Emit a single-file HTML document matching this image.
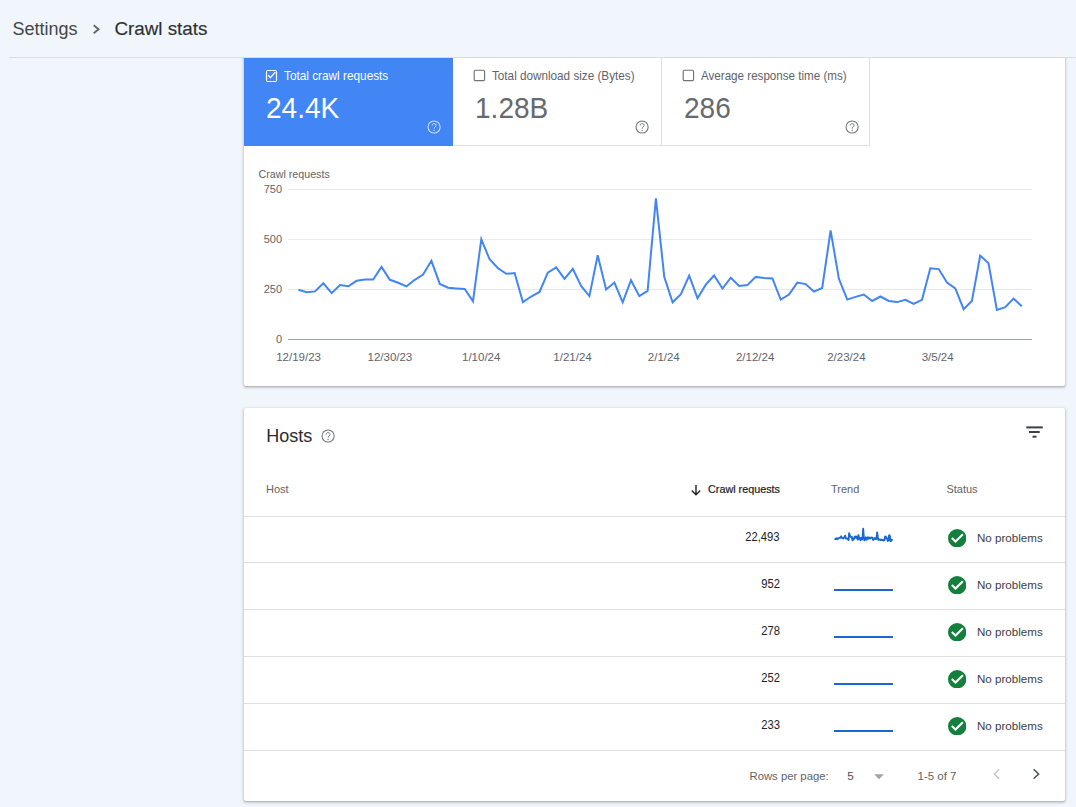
<!DOCTYPE html>
<html><head><meta charset="utf-8"><style>
html,body{margin:0;padding:0;width:1076px;height:807px;overflow:hidden;background:#f1f5fc;font-family:"Liberation Sans",sans-serif;}
.abs{position:absolute;}
.hline{height:1px;background:#e0e0e0;}
.card{position:absolute;background:#fff;border-radius:2px;box-shadow:0 1px 2px 0 rgba(60,64,67,.3),0 1px 3px 1px rgba(60,64,67,.15);}
.tl{font-size:12px;line-height:14px;white-space:nowrap;transform-origin:0 50%;}
.big{font-size:30px;line-height:32px;white-space:nowrap;transform:scaleX(0.935);transform-origin:0 50%;}
.ax{font-size:11px;line-height:13px;color:#5f6368;white-space:nowrap;}
.th{font-size:11px;line-height:13px;color:#5f6368;white-space:nowrap;}
.num{font-size:12.6px;line-height:14px;color:#202124;white-space:nowrap;transform:scaleX(0.89);transform-origin:100% 50%;}
.np{font-size:11.6px;line-height:14px;color:#3c4043;white-space:nowrap;}
</style></head><body>
<div class="card" style="left:244px;top:30px;width:821px;height:356px;">
  <div class="abs" style="left:0;top:28px;width:209px;height:88px;background:#4285f4"></div>
  <div class="abs" style="left:209px;top:115px;width:417px;height:1px;background:#e0e0e0"></div>
  <div class="abs" style="left:417px;top:28px;width:1px;height:88px;background:#e0e0e0"></div>
  <div class="abs" style="left:625px;top:28px;width:1px;height:88px;background:#e0e0e0"></div>
</div>
<!-- header cover -->
<div class="abs" style="left:0;top:0;width:1076px;height:57px;background:#f1f5fc"></div>
<div class="abs" style="left:9px;top:57px;width:1067px;height:1px;background:#dadce0"></div>

<div class="abs" style="left:12.5px;top:18px;font-size:18px;line-height:22px;color:#444746">Settings</div>
<svg class="abs" style="left:90px;top:22px" width="14" height="14" viewBox="0 0 14 14"><polyline points="3.7,3.2 8.6,7.2 3.7,11.2" fill="none" stroke="#5f6368" stroke-width="1.8"/></svg>
<div class="abs" style="left:114.5px;top:18px;font-size:18.8px;line-height:22px;color:#2d2f31;-webkit-text-stroke:0.15px #2d2f31">Crawl stats</div>

<!-- tile 1 -->
<svg class="abs" style="left:265px;top:69px" width="13" height="14" viewBox="0 0 13 14"><rect x="1.5" y="1.5" width="10" height="11" rx="1.2" fill="none" stroke="#fff" stroke-width="1.2"/><polyline points="3.2,6.3 5.4,8.6 10.3,3.1" fill="none" stroke="#fff" stroke-width="1.4"/></svg>
<div class="abs tl" style="left:283.5px;top:69px;color:#fff;font-size:12.7px;transform:scaleX(0.93)">Total crawl requests</div>
<div class="abs big" style="left:265.5px;top:91.6px;color:#fff">24.4K</div>
<svg class="abs" style="left:425.8px;top:118.8px" width="16" height="16" viewBox="0 0 16 16"><circle cx="8.1" cy="8" r="6.05" fill="none" stroke="rgba(255,255,255,0.75)" stroke-width="1.05"/><path d="M6.15 6.5 C6.15 5.3 7.0 4.6 8.1 4.6 C9.3 4.6 10.1 5.4 10.1 6.4 C10.1 7.7 8.1 8.1 8.1 9.7" fill="none" stroke="rgba(255,255,255,0.75)" stroke-width="1"/><circle cx="8.1" cy="11.5" r="0.65" fill="rgba(255,255,255,0.75)"/></svg>
<!-- tile 2 -->
<svg class="abs" style="left:473px;top:69px" width="13" height="13" viewBox="0 0 13 13"><rect x="1.2" y="1.2" width="10.4" height="10.4" rx="1.3" fill="none" stroke="#6f7276" stroke-width="1.15"/></svg>
<div class="abs tl" style="left:492.3px;top:69px;color:#5f6368;font-size:12.6px;transform:scaleX(0.93)">Total download size (Bytes)</div>
<div class="abs big" style="left:475px;top:91.6px;color:#666a6f">1.28B</div>
<svg class="abs" style="left:634.3px;top:118.7px" width="16" height="16" viewBox="0 0 16 16"><circle cx="8.1" cy="8" r="6.05" fill="none" stroke="#6f7377" stroke-width="1.05"/><path d="M6.15 6.5 C6.15 5.3 7.0 4.6 8.1 4.6 C9.3 4.6 10.1 5.4 10.1 6.4 C10.1 7.7 8.1 8.1 8.1 9.7" fill="none" stroke="#6f7377" stroke-width="1"/><circle cx="8.1" cy="11.5" r="0.65" fill="#6f7377"/></svg>
<!-- tile 3 -->
<svg class="abs" style="left:681.8px;top:69px" width="13" height="13" viewBox="0 0 13 13"><rect x="1.2" y="1.2" width="10.4" height="10.4" rx="1.3" fill="none" stroke="#6f7276" stroke-width="1.15"/></svg>
<div class="abs tl" style="left:700.8px;top:69px;color:#5f6368;font-size:12.6px;transform:scaleX(0.922)">Average response time (ms)</div>
<div class="abs big" style="left:683.5px;top:91.6px;color:#666a6f">286</div>
<svg class="abs" style="left:843.6px;top:119.1px" width="16" height="16" viewBox="0 0 16 16"><circle cx="8.1" cy="8" r="6.05" fill="none" stroke="#6f7377" stroke-width="1.05"/><path d="M6.15 6.5 C6.15 5.3 7.0 4.6 8.1 4.6 C9.3 4.6 10.1 5.4 10.1 6.4 C10.1 7.7 8.1 8.1 8.1 9.7" fill="none" stroke="#6f7377" stroke-width="1"/><circle cx="8.1" cy="11.5" r="0.65" fill="#6f7377"/></svg>

<!-- chart -->
<div class="abs ax" style="left:258.5px;top:167.5px;font-size:10.7px">Crawl requests</div>
<svg class="abs" style="left:0;top:0" width="1076" height="807" viewBox="0 0 1076 807">
  <g stroke="#e8eaed" stroke-width="1">
    <line x1="288" y1="189.5" x2="1032" y2="189.5"/>
    <line x1="288" y1="239.5" x2="1032" y2="239.5"/>
    <line x1="288" y1="289.5" x2="1032" y2="289.5"/>
  </g>
  <line x1="288" y1="339.5" x2="1032" y2="339.5" stroke="#9aa0a6" stroke-width="1"/>
  <polyline points="298.4,289.8 306.7,292.2 315.0,291.4 323.3,283.3 331.7,293.1 340.0,285.1 348.3,286.3 356.6,280.8 364.9,279.6 373.2,279.6 381.5,266.9 389.9,279.8 398.2,282.8 406.5,286.3 414.8,279.8 423.1,274.5 431.4,260.8 439.8,283.9 448.1,287.7 456.4,288.4 464.7,289.0 473.0,301.2 481.3,239.3 489.6,259.3 498.0,268.3 506.3,273.8 514.6,273.0 522.9,302.1 531.2,296.5 539.5,292.0 547.8,272.6 556.2,267.3 564.5,278.8 572.8,268.9 581.1,285.9 589.4,296.1 597.7,255.2 606.1,289.4 614.4,282.6 622.7,302.3 631.0,280.2 639.3,296.1 647.6,290.8 655.9,198.4 664.3,277.1 672.6,302.3 680.9,294.1 689.2,275.7 697.5,298.2 705.8,284.7 714.1,275.5 722.5,288.6 730.8,277.7 739.1,285.9 747.4,285.1 755.7,276.9 764.0,278.1 772.4,278.5 780.7,299.6 789.0,294.5 797.3,282.6 805.6,284.1 813.9,291.6 822.2,288.0 830.6,230.5 838.9,278.8 847.2,299.6 855.5,296.9 863.8,294.5 872.1,301.0 880.4,296.5 888.8,301.0 897.1,302.1 905.4,299.8 913.7,303.9 922.0,299.8 930.3,268.3 938.7,269.1 947.0,282.6 955.3,288.4 963.6,309.2 971.9,301.0 980.2,255.6 988.5,263.2 996.9,310.0 1005.2,307.2 1013.5,298.6 1021.8,306.2" fill="none" stroke="#4285f4" stroke-width="2" stroke-linejoin="miter" stroke-miterlimit="4"/>
</svg>
<div class="abs ax" style="right:794px;top:182.5px;text-align:right">750</div>
<div class="abs ax" style="right:794px;top:232.5px;text-align:right">500</div>
<div class="abs ax" style="right:794px;top:282.5px;text-align:right">250</div>
<div class="abs ax" style="right:794px;top:332.5px;text-align:right">0</div>
<div class="abs ax" style="left:248.6px;width:100px;text-align:center;top:350.8px;font-size:11.5px">12/19/23</div>
<div class="abs ax" style="left:339.9px;width:100px;text-align:center;top:350.8px;font-size:11.5px">12/30/23</div>
<div class="abs ax" style="left:431.2px;width:100px;text-align:center;top:350.8px;font-size:11.5px">1/10/24</div>
<div class="abs ax" style="left:522.5px;width:100px;text-align:center;top:350.8px;font-size:11.5px">1/21/24</div>
<div class="abs ax" style="left:613.8px;width:100px;text-align:center;top:350.8px;font-size:11.5px">2/1/24</div>
<div class="abs ax" style="left:705.1px;width:100px;text-align:center;top:350.8px;font-size:11.5px">2/12/24</div>
<div class="abs ax" style="left:796.4px;width:100px;text-align:center;top:350.8px;font-size:11.5px">2/23/24</div>
<div class="abs ax" style="left:887.7px;width:100px;text-align:center;top:350.8px;font-size:11.5px">3/5/24</div>

<!-- hosts card -->
<div class="card" style="left:244px;top:408px;width:821px;height:393px;">
  <div class="abs" style="left:22.3px;top:17px;font-size:18px;line-height:22px;color:#2a2b2e">Hosts</div>
  <div class="abs hline" style="left:0;top:108px;width:821px"></div><div class="abs num" style="right:285px;top:121.8px">22,493</div><div class="abs np" style="left:733px;top:123.1px">No problems</div><svg class="abs" style="left:703.7px;top:120.6px" width="18.4" height="18.4" viewBox="0 0 18.4 18.4"><circle cx="9.2" cy="9.2" r="9.2" fill="#15803d"/><polyline points="3.8,9.1 7.5,12.6 14.9,5.2" fill="none" stroke="#fff" stroke-width="2.05"/></svg><div class="abs hline" style="left:0;top:154px;width:821px"></div><div class="abs num" style="right:285px;top:168.8px">952</div><div class="abs np" style="left:733px;top:170.1px">No problems</div><svg class="abs" style="left:703.7px;top:167.6px" width="18.4" height="18.4" viewBox="0 0 18.4 18.4"><circle cx="9.2" cy="9.2" r="9.2" fill="#15803d"/><polyline points="3.8,9.1 7.5,12.6 14.9,5.2" fill="none" stroke="#fff" stroke-width="2.05"/></svg><div class="abs" style="left:590px;top:181px;width:59px;height:2px;background:#1967d2"></div><div class="abs hline" style="left:0;top:201px;width:821px"></div><div class="abs num" style="right:285px;top:215.8px">278</div><div class="abs np" style="left:733px;top:217.1px">No problems</div><svg class="abs" style="left:703.7px;top:214.6px" width="18.4" height="18.4" viewBox="0 0 18.4 18.4"><circle cx="9.2" cy="9.2" r="9.2" fill="#15803d"/><polyline points="3.8,9.1 7.5,12.6 14.9,5.2" fill="none" stroke="#fff" stroke-width="2.05"/></svg><div class="abs" style="left:590px;top:228px;width:59px;height:2px;background:#1967d2"></div><div class="abs hline" style="left:0;top:248px;width:821px"></div><div class="abs num" style="right:285px;top:262.8px">252</div><div class="abs np" style="left:733px;top:264.1px">No problems</div><svg class="abs" style="left:703.7px;top:261.6px" width="18.4" height="18.4" viewBox="0 0 18.4 18.4"><circle cx="9.2" cy="9.2" r="9.2" fill="#15803d"/><polyline points="3.8,9.1 7.5,12.6 14.9,5.2" fill="none" stroke="#fff" stroke-width="2.05"/></svg><div class="abs" style="left:590px;top:275px;width:59px;height:2px;background:#1967d2"></div><div class="abs hline" style="left:0;top:295px;width:821px"></div><div class="abs num" style="right:285px;top:309.8px">233</div><div class="abs np" style="left:733px;top:311.1px">No problems</div><svg class="abs" style="left:703.7px;top:308.6px" width="18.4" height="18.4" viewBox="0 0 18.4 18.4"><circle cx="9.2" cy="9.2" r="9.2" fill="#15803d"/><polyline points="3.8,9.1 7.5,12.6 14.9,5.2" fill="none" stroke="#fff" stroke-width="2.05"/></svg><div class="abs" style="left:590px;top:322px;width:59px;height:2px;background:#1967d2"></div><div class="abs hline" style="left:0;top:342px;width:821px"></div>
</div>
<svg class="abs" style="left:320.4px;top:428.0px" width="16" height="16" viewBox="0 0 16 16"><circle cx="8.1" cy="8" r="6.05" fill="none" stroke="#6f7377" stroke-width="1.05"/><path d="M6.15 6.5 C6.15 5.3 7.0 4.6 8.1 4.6 C9.3 4.6 10.1 5.4 10.1 6.4 C10.1 7.7 8.1 8.1 8.1 9.7" fill="none" stroke="#6f7377" stroke-width="1"/><circle cx="8.1" cy="11.5" r="0.65" fill="#6f7377"/></svg>
<svg class="abs" style="left:1022px;top:420px" width="24" height="24" viewBox="0 0 24 24"><rect x="4.3" y="6.4" width="16.5" height="2" fill="#3c4043"/><rect x="7" y="11" width="10.7" height="2" fill="#3c4043"/><rect x="10.5" y="15.7" width="4" height="2" fill="#3c4043"/></svg>
<div class="abs th" style="left:266px;top:482.5px">Host</div>
<svg class="abs" style="left:690px;top:484px" width="12" height="12" viewBox="0 0 12 12"><path d="M6 1 V10.5 M1.8 6.6 L6 10.8 L10.2 6.6" fill="none" stroke="#202124" stroke-width="1.4"/></svg>
<div class="abs th" style="right:296px;top:482.5px;color:#202124;font-size:10.8px;-webkit-text-stroke:0.2px #202124">Crawl requests</div>
<div class="abs th" style="left:831px;top:482.5px">Trend</div>
<div class="abs th" style="left:946.4px;top:482.5px">Status</div>
<svg class="abs" style="left:0;top:0" width="1076" height="807" viewBox="0 0 1076 807"><polyline points="834.50,538.87 835.17,539.14 835.83,539.05 836.50,538.15 837.17,539.23 837.83,538.36 838.50,538.49 839.17,537.88 839.83,537.75 840.50,537.75 841.17,536.35 841.83,537.77 842.50,538.11 843.17,538.49 843.83,537.77 844.50,537.19 845.17,535.68 845.83,538.22 846.50,538.65 847.17,538.72 847.83,538.78 848.50,540.13 849.17,533.32 849.83,535.52 850.50,536.51 851.17,537.12 851.83,537.03 852.50,540.22 853.17,539.62 853.83,539.12 854.50,536.98 855.17,536.40 855.83,537.66 856.50,536.58 857.17,538.45 857.83,539.57 858.50,535.07 859.17,538.83 859.83,538.09 860.50,540.25 861.17,537.82 861.83,539.57 862.50,538.99 863.17,528.82 863.83,537.48 864.50,540.25 865.17,539.35 865.83,537.32 866.50,539.80 867.17,538.31 867.83,537.30 868.50,538.74 869.17,537.55 869.83,538.45 870.50,538.36 871.17,537.46 871.83,537.59 872.50,537.64 873.17,539.95 873.83,539.39 874.50,538.09 875.17,538.24 875.83,539.08 876.50,538.67 877.17,532.35 877.83,537.66 878.50,539.95 879.17,539.66 879.83,539.39 880.50,540.11 881.17,539.62 881.83,540.11 882.50,540.22 883.17,539.98 883.83,540.43 884.50,539.98 885.17,536.51 885.83,536.60 886.50,538.09 887.17,538.72 887.83,541.01 888.50,540.11 889.17,535.12 889.83,535.95 890.50,541.10 891.17,540.79 891.83,539.84 892.50,540.67" fill="none" stroke="#1967d2" stroke-width="1.9" stroke-linejoin="round"/></svg>
<!-- footer -->
<div class="abs th" style="left:749.5px;top:769.6px;font-size:11.3px;color:#5f6368">Rows per page:</div>
<div class="abs th" style="left:847.3px;top:769.6px;font-size:11.8px;color:#4d5156">5</div>
<svg class="abs" style="left:872px;top:772.7px" width="14" height="8" viewBox="0 0 14 8"><polygon points="2.2,1.2 11.8,1.2 7,6.2" fill="#a0a4a8"/></svg>
<div class="abs th" style="left:917.5px;top:769.9px;font-size:11.5px;color:#5f6368">1-5 of 7</div>
<svg class="abs" style="left:988px;top:766px" width="16" height="16" viewBox="0 0 16 16"><polyline points="11.2,3.3 6.3,8 11.2,12.7" fill="none" stroke="#c4c7ca" stroke-width="1.5"/></svg>
<svg class="abs" style="left:1029px;top:766px" width="16" height="16" viewBox="0 0 16 16"><polyline points="4.6,3.3 9.6,8 4.6,12.7" fill="none" stroke="#4a4e52" stroke-width="1.5"/></svg>
</body></html>
